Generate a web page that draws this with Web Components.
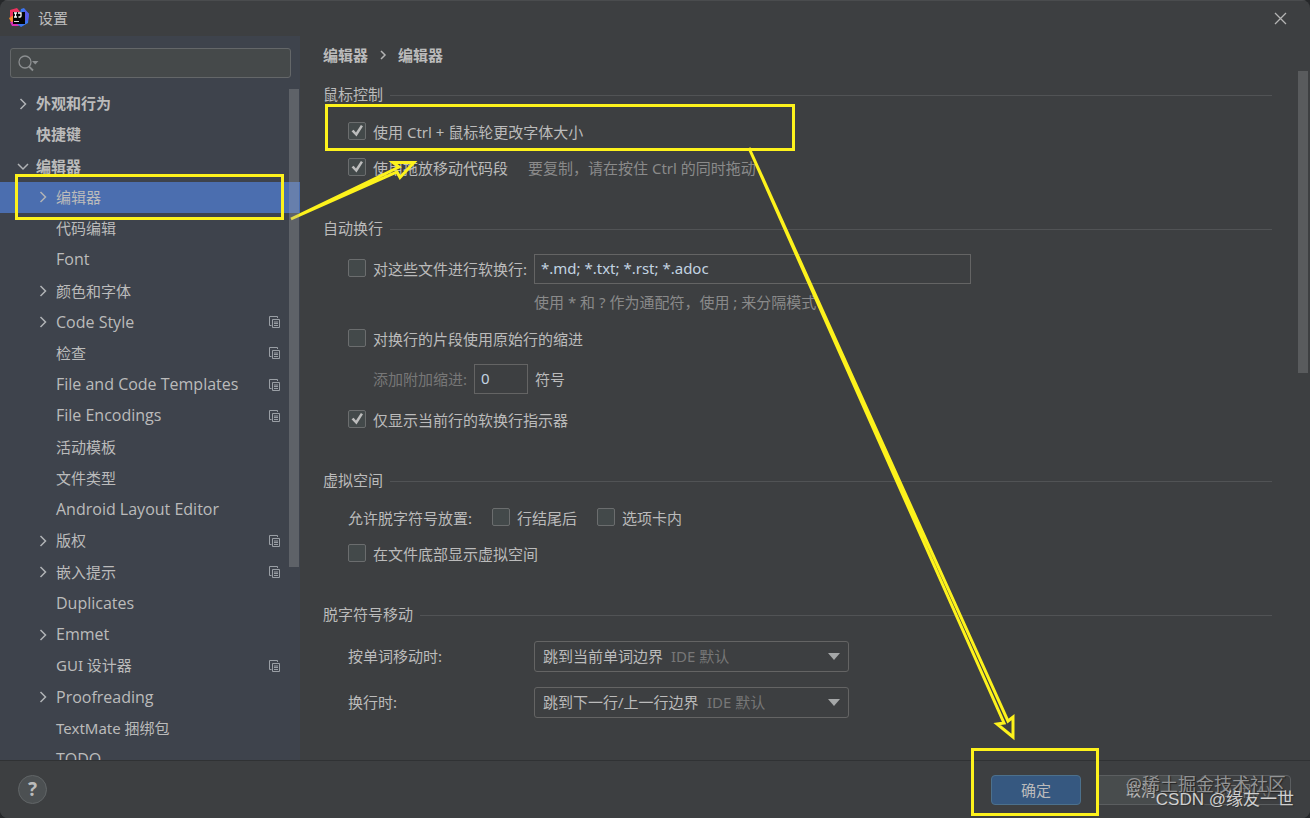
<!DOCTYPE html>
<html lang="zh-CN">
<head>
<meta charset="utf-8">
<title>设置</title>
<style>
html, body { margin: 0; height: 100%; }
body {
  background: #26282a;
  color: #bbbbbb;
  font: 15px/20px "Noto Sans", "Noto Sans CJK SC", sans-serif;
  overflow: hidden;
}
</style>
</head>
<body>
<settings-window>
  <title-bar slot="title">设置</title-bar>
  <settings-sidebar slot="sidebar">
    <tree-row level="0" arrow="right">外观和行为</tree-row>
    <tree-row level="0">快捷键</tree-row>
    <tree-row level="0" arrow="down">编辑器</tree-row>
    <tree-row arrow="right" selected>编辑器</tree-row>
    <tree-row>代码编辑</tree-row>
    <tree-row lang="en">Font</tree-row>
    <tree-row arrow="right">颜色和字体</tree-row>
    <tree-row lang="en" arrow="right" project>Code Style</tree-row>
    <tree-row project>检查</tree-row>
    <tree-row lang="en" project>File and Code Templates</tree-row>
    <tree-row lang="en" project>File Encodings</tree-row>
    <tree-row>活动模板</tree-row>
    <tree-row>文件类型</tree-row>
    <tree-row lang="en">Android Layout Editor</tree-row>
    <tree-row arrow="right" project>版权</tree-row>
    <tree-row arrow="right" project>嵌入提示</tree-row>
    <tree-row lang="en">Duplicates</tree-row>
    <tree-row lang="en" arrow="right">Emmet</tree-row>
    <tree-row project>GUI 设计器</tree-row>
    <tree-row lang="en" arrow="right">Proofreading</tree-row>
    <tree-row>TextMate 捆绑包</tree-row>
    <tree-row lang="en">TODO</tree-row>
  </settings-sidebar>
  <settings-page slot="page">
    <settings-section heading="鼠标控制">
      <form-row><check-option checked>使用 Ctrl + 鼠标轮更改字体大小</check-option></form-row>
      <form-row><check-option checked>使用拖放移动代码段</check-option><note-text>要复制，请在按住 Ctrl 的同时拖动</note-text></form-row>
    </settings-section>
    <settings-section heading="自动换行">
      <soft-wrap-row></soft-wrap-row>
      <form-row><check-option>对换行的片段使用原始行的缩进</check-option></form-row>
      <indent-row></indent-row>
      <form-row><check-option checked>仅显示当前行的软换行指示器</check-option></form-row>
    </settings-section>
    <settings-section heading="虚拟空间">
      <form-row><span>允许脱字符号放置:</span><check-option>行结尾后</check-option><check-option>选项卡内</check-option></form-row>
      <form-row><check-option>在文件底部显示虚拟空间</check-option></form-row>
    </settings-section>
    <settings-section heading="脱字符号移动">
      <select-row label="按单词移动时:" value="跳到当前单词边界"></select-row>
      <select-row label="换行时:" value="跳到下一行/上一行边界"></select-row>
    </settings-section>
  </settings-page>
  <dialog-footer slot="footer"></dialog-footer>
</settings-window>
<annotation-layer></annotation-layer>

<script>
function define(name, html, setup) {
  const template = document.createElement('template');
  template.innerHTML = html;
  customElements.define(name, class extends HTMLElement {
    constructor() {
      super();
      this.attachShadow({ mode: 'open' }).append(template.content.cloneNode(true));
    }
    connectedCallback() { if (setup) setup(this, this.shadowRoot); }
  });
}

define('settings-window', `
<style>
:host { display: flex; flex-direction: column; height: 100vh; background: #3d3f41; border-radius: 8px; overflow: hidden; box-sizing: border-box; }
.body { flex: 1; min-height: 0; display: grid; grid-template-columns: 300px minmax(0, 1fr); }
::slotted(*) { min-height: 0; }
</style>
<slot name="title"></slot>
<div class="body"><slot name="sidebar"></slot><slot name="page"></slot></div>
<slot name="footer"></slot>`);

define('title-bar', `
<style>
:host { display: flex; align-items: center; gap: 9px; height: 36px; padding: 0 23px 0 9px; flex: none; box-shadow: inset 0 1px #4a4c4e; }
.name { flex: 1; }
button { all: unset; width: 14px; height: 16px; display: grid; place-items: center; }
svg { display: block; }
</style>
<svg width="20" height="20" viewBox="0 0 20 20" aria-hidden="true">
  <path d="M1 2 L8 0 L12 5 L5 10 L1 9Z" fill="#f0315f"/>
  <path d="M0 10 L5 7 L6 14 L3 16Z" fill="#fa8a2a"/>
  <path d="M1 14 L8 13 L10 18 L3 18Z" fill="#d92fb4"/>
  <path d="M12 1 L15 0 L20 6 L19 15 L12 19 L8 16Z" fill="#3a76f0"/>
  <path d="M15 1 L20 6 L19 12 L15 14Z" fill="#5a5ae8"/>
  <rect x="4" y="4" width="12" height="12" fill="#050505"/>
  <path d="M5 5h3M6.500 5v4M5 9h3M9 5h3v3q0 1-1 1h-1.500" fill="none" stroke="#fff" stroke-width="1.300"/>
  <path d="M5 13.500h5" stroke="#ddd"/>
</svg>
<span class="name"><slot></slot></span>
<button aria-label="关闭"><svg width="13" height="13" viewBox="0 0 13 13"><path d="M1 1 L12 12 M12 1 L1 12" stroke="#b4b4b4" stroke-width="1.300"/></svg></button>`);

define('settings-sidebar', `
<style>
:host { display: flex; flex-direction: column; background: #3e434c; overflow: hidden; }
.search { display: flex; align-items: center; height: 28px; margin: 12px 9px 10px 10px; padding-left: 7px; border: 1px solid #646769; border-radius: 3px; background: #45494a; flex: none; }
.search input { all: unset; flex: 1; height: 28px; }
.area { flex: 1; min-height: 0; display: grid; overflow: hidden; }
.tree { grid-area: 1 / 1; display: flex; flex-direction: column; height: 687px; }
.bar { grid-area: 1 / 1; justify-self: end; width: 10px; height: 478px; margin: 1px 1px 0 0; background: #a6a6a650; z-index: 1; }
</style>
<div class="search">
  <svg width="22" height="18" viewBox="0 0 22 18" fill="none" stroke="#8b8e90"><circle cx="7" cy="8" r="6" stroke-width="1.300"/><path d="M11 12.500l4 4" stroke-width="1.800"/><path d="M14 7h6.500L17.300 10.500Z" fill="#8b8e90" stroke="none"/></svg>
  <input type="text" aria-label="搜索">
</div>
<div class="area"><div class="tree" role="tree"><slot></slot></div><div class="bar"></div></div>`);

define('tree-row', `
<style>
:host { display: flex; align-items: center; flex: 1; padding: 0 20px 0 36px; white-space: nowrap; }
:host([level="0"]) { padding-left: 16px; font-weight: 700; }
:host([selected]) { background: #4b6eaf; }
:host([lang="en"]) { font-family: "Open Sans", "Noto Sans", sans-serif; font-size: 16px; }
.arrow { width: 14px; height: 14px; margin-right: 6px; }
.arrow path { fill: none; stroke: #b0b3b6; stroke-width: 1.500; display: none; }
:host([arrow="right"]) .r, :host([arrow="down"]) .d { display: block; }
.text { flex: 1; padding-bottom: 1px; }
.copy { display: none; fill: none; stroke: #9a9fa5; }
:host([project]) .copy { display: block; }
</style>
<svg class="arrow" viewBox="0 0 14 14" aria-hidden="true"><path class="r" d="M4.500 2l5 5-5 5"/><path class="d" d="M2 5l5 5 5-5"/></svg>
<span class="text"><slot></slot></span>
<svg class="copy" width="11" height="12" viewBox="0 0 11 12" aria-hidden="true"><path d="M2.500 9.500H.5V.5H8.500V2M3.500 3.500h7v8h-7zM5 6h4M5 7.500h4M5 9.500h4"/></svg>`,
  host => host.setAttribute('role', 'treeitem'));

define('settings-page', `
<style>
:host { display: grid; grid-template-columns: minmax(0, 1fr) 10px; padding: 0 2px 0 23px; overflow: hidden; }
.content { padding-right: 26px; }
.crumbs { display: flex; align-items: center; gap: 11px; height: 38px; font-weight: 700; margin-bottom: 9px; }
.bar { margin-top: 35px; height: 302px; background: #595b5d; }
.sections { display: flex; flex-direction: column; gap: 31px; }
</style>
<div class="content">
  <nav class="crumbs"><span>编辑器</span><svg width="8" height="12" viewBox="0 0 8 12"><path d="M2 2l4 4-4 4" fill="none" stroke="#b4b4b4" stroke-width="1.500"/></svg><span>编辑器</span></nav>
  <div class="sections"><slot></slot></div>
</div>
<div class="bar"></div>`);

define('settings-section', `
<style>
:host { display: block; }
.head { display: flex; align-items: center; gap: 7px; height: 24px; margin-bottom: 7px; }
h2 { margin: 0; font: inherit; padding-bottom: 2px; }
.line { flex: 1; height: 1px; background: #515355; }
.rows { padding-left: 25px; }
</style>
<div class="head"><h2></h2><div class="line"></div></div>
<div class="rows"><slot></slot></div>`,
  (host, root) => { root.querySelector('h2').textContent = host.getAttribute('heading'); });

define('form-row', `
<style>:host { display: flex; align-items: center; gap: 20px; height: 36px; white-space: nowrap; }</style><slot></slot>`);

define('note-text', `<style>:host { display: block; color: #8a8a8a; padding-bottom: 1px; }</style><slot></slot>`);

const checkStyle = `
label.check { display: flex; align-items: center; gap: 8px; white-space: nowrap; }
label.check input { appearance: none; width: 18px; height: 18px; margin: 0 -1px 2px 0; border: 1px solid #6b6d6e; border-radius: 2px; background: #43494a; display: grid; place-items: center; flex: none; }
label.check input:checked::before { content: ""; width: 13px; height: 13px; background: #bcbcbc; clip-path: polygon(8% 52%, 24% 40%, 42% 62%, 80% 4%, 96% 14%, 46% 92%); }
`;

define('check-option', `
<style>:host { display: block; }${checkStyle}</style>
<label class="check"><input type="checkbox"><span><slot></slot></span></label>`,
  (host, root) => { root.querySelector('input').checked = host.hasAttribute('checked'); });

define('soft-wrap-row', `
<style>
:host { display: grid; grid-template-columns: 186px minmax(0, 437px); grid-template-rows: 42px 26px; align-items: center; margin-bottom: 5px; white-space: nowrap; }
.field { box-sizing: border-box; width: 100%; height: 30px; padding: 0 6px 2px; border: 1px solid #646464; background: transparent; color: #c3d4e2; font: inherit; border-radius: 0; }
.hint { grid-column: 2; color: #8a8a8a; padding-bottom: 2px; }
${checkStyle}
</style>
<label class="check"><input type="checkbox"><span>对这些文件进行软换行:</span></label>
<input class="field" type="text" value="*.md; *.txt; *.rst; *.adoc" aria-label="软换行文件模式" aria-describedby="hint">
<span class="hint" id="hint">使用 * 和 ? 作为通配符，使用 ; 来分隔模式</span>`);

define('indent-row', `
<style>
:host { display: flex; align-items: center; gap: 7px; height: 43px; margin-bottom: 2px; padding-left: 25px; white-space: nowrap; }
label { color: #777777; }
input { box-sizing: border-box; width: 54px; height: 30px; padding: 0 6px 2px; border: 1px solid #646464; background: transparent; color: #c3d4e2; font: inherit; border-radius: 0; }
</style>
<label for="n">添加附加缩进:</label><input id="n" type="text" value="0"><span>符号</span>`);

define('select-row', `
<style>
:host { display: grid; grid-template-columns: 186px minmax(0, 315px); align-items: center; height: 44px; margin-bottom: 2px; white-space: nowrap; }
.box { display: grid; align-items: center; }
.box > * { grid-area: 1 / 1; }
select { appearance: none; width: 100%; height: 31px; padding: 0 30px 0 8px; border: 1px solid #646464; border-radius: 3px; background: transparent; color: inherit; font: inherit; }
.note { color: #777777; pointer-events: none; }
svg { justify-self: end; margin-right: 9px; pointer-events: none; }
</style>
<label for="s"></label>
<div class="box"><select id="s"><option></option></select><span class="note">IDE 默认</span>
<svg width="12" height="7" viewBox="0 0 12 7"><path d="M0 0h12L6 7z" fill="#a5a7a8"/></svg></div>`,
  (host, root) => {
    const value = host.getAttribute('value');
    root.querySelector('label').textContent = host.getAttribute('label');
    root.querySelector('option').textContent = value;
    // The secondary note follows the selected text inside the box.
    const pen = document.createElement('canvas').getContext('2d');
    pen.font = '15px "Noto Sans", "Noto Sans CJK SC", sans-serif';
    root.querySelector('.note').style.paddingLeft = Math.round(pen.measureText(value).width) + 17 + 'px';
  });

define('dialog-footer', `
<style>
:host { display: flex; align-items: center; gap: 15px; height: 57px; padding: 0 19px 0 18px; border-top: 1px solid #303234; flex: none; background: #3d3f41; }
button { box-sizing: border-box; width: 90px; height: 30px; padding: 0; border: 1px solid #5b5e60; border-radius: 4px; background: #484c4d; color: inherit; font: inherit; }
.help { width: 29px; height: 29px; border-radius: 50%; margin-right: auto; font-weight: 700; font-size: 19px; line-height: 27px; background: #4c5052; border-color: #616567; }
.ok { background: #365880; border-color: #4c708c; }
.apply { color: #777777; background: transparent; }
</style>
<button class="help" aria-label="帮助">?</button>
<button class="ok">确定</button>
<button class="cancel">取消</button>
<button class="apply" disabled>应用(A)</button>`);

define('annotation-layer', `
<style>
:host { display: block; position: absolute; inset: 0; pointer-events: none; overflow: hidden; }
svg { position: absolute; left: 0; top: 0; }
.mark { position: absolute; white-space: nowrap; }
.first { right: 24px; bottom: 22px; font-size: 18px; line-height: 24px; color: #929394; text-shadow: 1px 1px 1px #222; }
.second { right: 16px; bottom: 6px; font: 17px/24px "Liberation Sans", "Noto Sans CJK SC", sans-serif; color: #d0d0d0; text-shadow: 1px 1px 1px #333; }
</style>
<span class="mark first">@稀土掘金技术社区</span>
<span class="mark second">CSDN @缘友一世</span>
<svg width="1310" height="818" viewBox="0 0 1310 818" fill="none" stroke="#fdf21c" stroke-width="3" aria-hidden="true">
  <rect x="16.500" y="175.500" width="266" height="43"/>
  <rect x="326.500" y="105.500" width="467" height="44"/>
  <rect x="972.500" y="749.500" width="125" height="65"/>
  <path d="M291 219L399 167L393 162.500L414 162.500L400 177.500L397 172Z"/>
  <path d="M749 148L1008 721L1013 717L1013 737L997 724L1004 723Z"/>
</svg>`);
</script>
</body>
</html>
